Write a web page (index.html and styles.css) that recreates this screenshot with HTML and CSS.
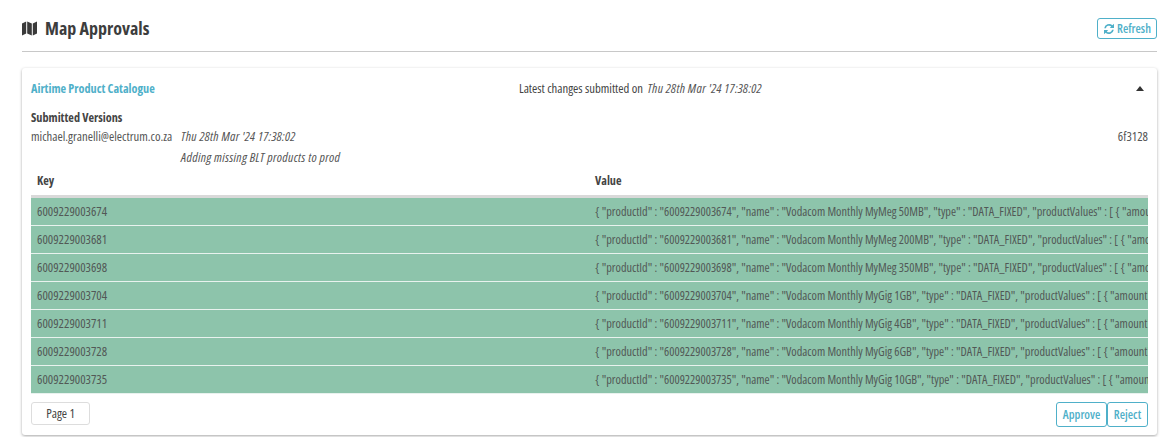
FILE: index.html
```html
<!DOCTYPE html>
<html lang="en">
<head>
<meta charset="utf-8">
<title>Map Approvals</title>
<link rel="stylesheet" href="styles.css">
</head>
<body>
<header class="page-head">
  <h1 class="title">
    <svg class="map-icon" viewBox="0 0 15 15" width="15" height="15"><path d="M0 2.6 4.2.6V12.4L0 14.4ZM5.2.6 9.8 2.6V14.4L5.2 12.4ZM10.8 2.6 15 .6V12.4L10.8 14.4Z"/></svg>
    <span>Map Approvals</span>
  </h1>
  <button class="btn refresh">
    <svg class="refresh-icon" viewBox="0 0 12 12" width="12" height="12"><path d="M1.2 5.2A4.9 4.9 0 0 1 9.4 2.3L11 .8V5H6.8L8.2 3.6A3.2 3.2 0 0 0 2.9 5.2ZM10.8 6.8A4.9 4.9 0 0 1 2.6 9.7L1 11.2V7H5.2L3.8 8.4A3.2 3.2 0 0 0 9.1 6.8Z"/></svg>
    Refresh
  </button>
</header>
<section class="panel">
  <div class="panel-head">
    <a class="catalogue">Airtime Product Catalogue</a>
    <div class="latest">Latest changes submitted on <em>Thu 28th Mar '24 17:38:02</em></div>
    <span class="caret"></span>
  </div>
  <div class="versions-title">Submitted Versions</div>
  <div class="version">
    <span class="author">michael.granelli@electrum.co.za</span>
    <div class="meta"><em>Thu 28th Mar '24 17:38:02</em><em>Adding missing BLT products to prod</em></div>
    <span class="hash">6f3128</span>
  </div>
  <div class="grid-head"><div class="key">Key</div><div class="value">Value</div></div>
  <div class="row"><div class="key">6009229003674</div><div class="value">{ "productId" : "6009229003674", "name" : "Vodacom Monthly MyMeg 50MB", "type" : "DATA_FIXED", "productValues" : [ { "amount" : 50 } ] }</div></div>
  <div class="row"><div class="key">6009229003681</div><div class="value">{ "productId" : "6009229003681", "name" : "Vodacom Monthly MyMeg 200MB", "type" : "DATA_FIXED", "productValues" : [ { "amount" : 200 } ] }</div></div>
  <div class="row"><div class="key">6009229003698</div><div class="value">{ "productId" : "6009229003698", "name" : "Vodacom Monthly MyMeg 350MB", "type" : "DATA_FIXED", "productValues" : [ { "amount" : 350 } ] }</div></div>
  <div class="row"><div class="key">6009229003704</div><div class="value">{ "productId" : "6009229003704", "name" : "Vodacom Monthly MyGig 1GB", "type" : "DATA_FIXED", "productValues" : [ { "amount" : 1 } ] }</div></div>
  <div class="row"><div class="key">6009229003711</div><div class="value">{ "productId" : "6009229003711", "name" : "Vodacom Monthly MyGig 4GB", "type" : "DATA_FIXED", "productValues" : [ { "amount" : 4 } ] }</div></div>
  <div class="row"><div class="key">6009229003728</div><div class="value">{ "productId" : "6009229003728", "name" : "Vodacom Monthly MyGig 6GB", "type" : "DATA_FIXED", "productValues" : [ { "amount" : 6 } ] }</div></div>
  <div class="row"><div class="key">6009229003735</div><div class="value">{ "productId" : "6009229003735", "name" : "Vodacom Monthly MyGig 10GB", "type" : "DATA_FIXED", "productValues" : [ { "amount" : 10 } ] }</div></div>
  <div class="panel-foot">
    <div class="pager">Page 1</div>
    <div class="actions"><button class="btn approve">Approve</button><button class="btn reject">Reject</button></div>
  </div>
</section>
</body>
</html>
```
FILE: styles.css
```css
* { box-sizing: border-box; }
html, body { height: 100%; overflow: hidden; }
body {
  margin: 0;
  padding: 0 7px 0 22px;
  background: #fff;
  color: #444;
  font-family: "Open Sans", sans-serif;
  font-stretch: 75%;
  font-size: 12.7px;
  line-height: 17px;
}
em { font-size: 13px; letter-spacing: .3px; }
.page-head {
  display: flex;
  align-items: center;
  justify-content: space-between;
  height: 52px;
  padding: 6px 0 0;
  border-bottom: 1px solid #c8c8c8;
}
.title {
  display: flex;
  align-items: center;
  gap: 8px;
  margin: 0;
  color: #3d3d3d;
  font-size: 18px;
  font-weight: 700;
}
.map-icon { fill: #3a3a3a; }
.btn {
  height: 25px;
  padding: 0;
  background: #fff;
  border: 1px solid #4fb0c9;
  border-radius: 3px;
  color: #4fb0c9;
  font: inherit;
  font-size: 12.2px;
  font-weight: 600;
}
.refresh {
  display: flex;
  align-items: center;
  justify-content: center;
  gap: 2px;
  height: 21px;
  width: 60px;
}
.refresh-icon { fill: #4fb0c9; }
.panel {
  height: 367px;
  margin-top: 16px;
  padding: 0 9px;
  border-radius: 3px;
  background: #fff;
  box-shadow: 0 1px 3px rgba(0,0,0,.35);
}
.panel-head {
  display: flex;
  align-items: center;
  height: 40px;
}
.catalogue { width: 488px; color: #4fb0c9; font-size: 12.2px; font-weight: 700; }
.latest { flex: 1; }
.latest em { margin-left: 2px; }
.caret {
  width: 0; height: 0;
  margin-right: 4px;
  border: 4px solid transparent;
  border-top: 0;
  border-bottom: 5px solid #333;
}
.versions-title { margin-top: 1px; font-size: 12.2px; font-weight: 700; }
.version { display: flex; color: #555; height: 40px; padding-top: 2px; }
.author { width: 150px; }
.meta { display: flex; flex-direction: column; flex: 1; gap: 4px; }
.meta em, .latest em { color: #555; }
.grid-head {
  display: flex;
  align-items: center;
  height: 32px;
  padding-bottom: 1px;
  border-bottom: 3px solid #d9d9d9;
  font-size: 12.2px;
  font-weight: 700;
}
.key { width: 558px; padding-left: 6px; flex: none; }
.value { padding-left: 6px; flex: 1; white-space: nowrap; overflow: hidden; }
.row {
  display: flex;
  align-items: center;
  height: 28px;
  padding-bottom: 1px;
  background: #8dc4ab;
  border-bottom: 1px solid #e8f2ee;
  color: #525856;
  overflow: hidden;
}
.row .value { font-size: 12.25px; }
.row:last-of-type { border-bottom: 0; padding-bottom: 0; }
.panel-foot {
  display: flex;
  justify-content: space-between;
  align-items: flex-start;
  padding-top: 8px;
}
.pager {
  width: 59px;
  height: 23px;
  border: 1px solid #ddd;
  border-radius: 3px;
  text-align: center;
  line-height: 20px;
}
.actions { display: flex; }
.approve { width: 51px; }
.reject { width: 41px; }
```
